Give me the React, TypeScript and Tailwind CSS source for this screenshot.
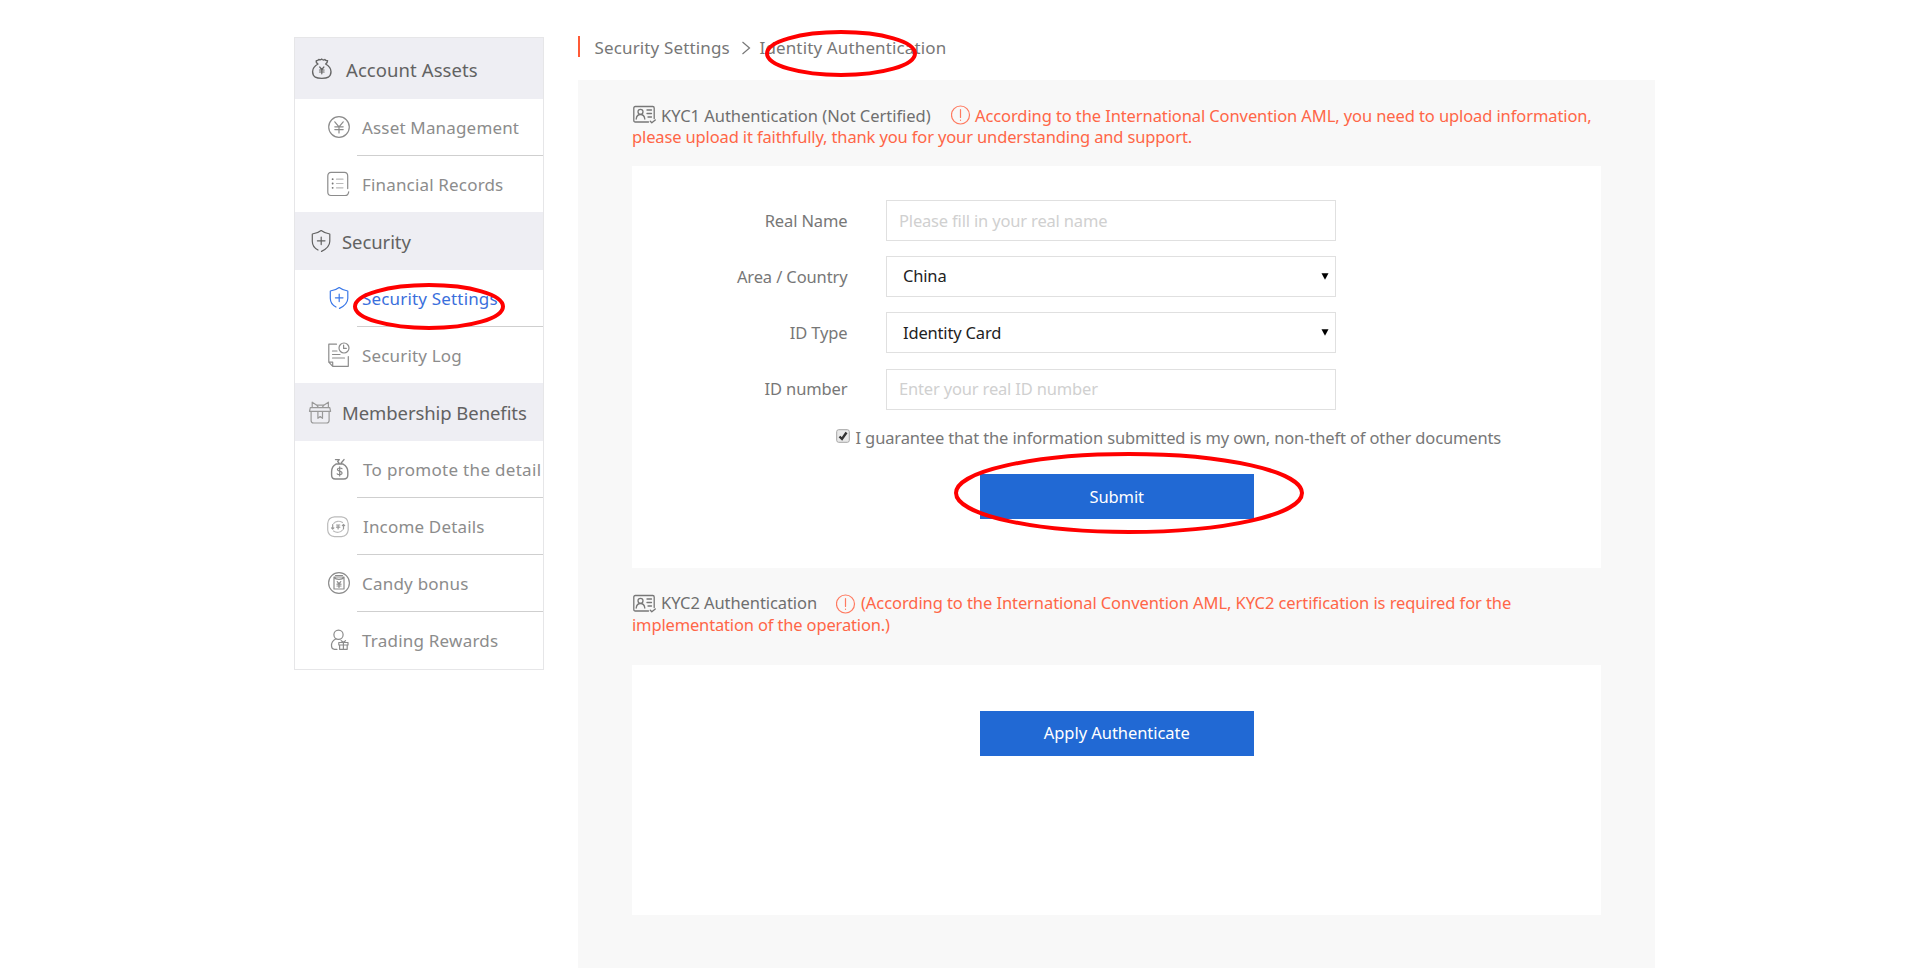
import type { ReactNode } from "react";

function Icon({ children, className = "" }: { children: ReactNode; className?: string }) {
  return (
    <svg
      viewBox="0 0 26 26"
      className={`h-[26px] w-[26px] shrink-0 ${className}`}
      fill="none"
      stroke="currentColor"
      strokeWidth="1.2"
      strokeLinecap="round"
      strokeLinejoin="round"
    >
      {children}
    </svg>
  );
}

const YenBag = () => (
  <Icon className="text-[#666]">
    <path
      strokeWidth="1.4"
      d="M10 8C8.500 7.200 8 6 8.300 4.600C9.300 4.800 10 4.400 10.800 3.500C11.800 4 12.800 4 13.800 3.100C14.600 4 15.600 4.200 16.800 3.500C17.400 4.400 18.400 4.800 19.600 4.600C19.600 6 19 7.200 17.600 8C20.900 9.800 23 12.500 23 15.800C23 18 22 20 20.300 21.200C18.800 22.200 16.500 22.400 13.800 22.400C11 22.400 8.800 22.200 7.300 21.200C5.600 20 4.600 18 4.600 15.800C4.600 12.500 6.700 9.800 10 8Z"
    />
    <path d="M11.700 11L13.800 13.500L15.900 11M11.500 14H16.100M11.500 16H16.100M13.800 13.500V17.800" />
  </Icon>
);
const YenCircle = () => (
  <Icon>
    <circle cx="13" cy="13" r="10.3" />
    <path d="M8.800 7.800L13 12.800L17.200 7.800M8.800 12.800H17.200M8.800 15.600H17.200M13 12.800V19" />
  </Icon>
);
const ListIcon = () => (
  <Icon>
    <path d="M21.700 17.600V5C21.700 2.900 20.600 1.400 18.500 1.400H5C3 1.400 1.800 2.900 1.800 5V21C1.800 23 3 24.500 5 24.500H19C21 24.500 22.300 23.400 22.700 20.800" />
    <path stroke="#777" strokeWidth="1.8" d="M6.600 8.200H6.700M6.600 12.500H6.700M6.600 16.800H6.700" />
    <path stroke="#bbb" d="M10.500 8.200H17M10.500 12.500H17M10.500 16.800H17" />
  </Icon>
);
const Shield = ({ className = "" }: { className?: string }) => (
  <Icon className={className}>
    <path d="M10 22C6 19.800 4.300 17 4.300 13.200V6C7.500 5.800 10.600 4.600 13.200 2.600C15.800 4.600 18.800 5.800 21.800 6V13.200C21.800 17.500 18.700 20.800 13.500 23.400" />
    <path d="M13.200 9V16.600M9.400 12.800H17" />
  </Icon>
);
const LogIcon = () => (
  <Icon>
    <path d="M10.500 2.200H2.800V20.200L6.700 24.300H22.300V14.500M2.800 20.200H6.700V24.300" />
    <path d="M6.500 9H11M6.500 12.500H14M6.500 16H18.500" />
    <circle cx="18" cy="6" r="5" />
    <path d="M17.600 3.200V6.400H20.300" />
  </Icon>
);
const Gift = () => (
  <Icon className="text-[#999]">
    <path d="M2.300 8.600H21.800L22.600 12.300H1.500L2.300 8.600ZM3.100 12.300V21.500C3.100 23.300 3.800 24 5.600 24H18.600C20.400 24 21.100 23.300 21.100 21.500V12.300M4.200 8.300V3.200L8.800 6.200L10.300 8.400M20.400 8.300V3.200L15.800 6.200L14.300 8.400M8.800 6.200H15.800M9.900 12.500V19.300L12.200 17.500L14.500 19.300V12.500" />
  </Icon>
);
const DollarBag = () => (
  <Icon className="text-[#888]">
    <path
      strokeWidth="1.400"
      d="M9.500 3.600H13.300L11.700 5.400L13.200 7.500M18 3.600L15.200 7M10 8H17M10 8.200C7 9.800 5.600 12.500 5.600 15.800V19C5.600 21.800 6.800 23 9.300 23H17.700C20.200 23 21.800 21.800 21.800 19V15.800C21.800 12.500 20 9.800 17 8.200"
    />
    <path d="M16 12.700C15.200 11.700 11.400 11.600 11.400 13.600C11.400 15.600 16.100 14.700 16.100 17C16.100 19 12.200 19 11.200 17.800M13.700 10.800V20" />
  </Icon>
);
const IncomeIcon = () => (
  <Icon className="text-[#bbb]">
    <path d="M8.500 3.900H15.500C19.500 4.200 21.800 6.700 22.200 10.500V17C21.800 20.800 19.500 23.300 15.500 23.700H8.500C4.500 23.300 2 20.800 1.700 17V10.500C2 6.700 4.500 4.200 8.500 3.900Z" />
    <path d="M16.500 9.500C13.500 7.500 9.500 8 7.700 10.500M7.500 18C10.500 20 14.500 19.700 16.500 17" />
    <path stroke="#999" d="M6.700 11.500V16M5.500 14.900L6.700 16L7.900 14.900M17.500 16V11.500M16.300 12.600L17.500 11.500L18.700 12.600M10.500 12H13.800M10.500 14.200H13.800M12.100 12V16" />
  </Icon>
);
const CandyIcon = () => (
  <Icon>
    <circle cx="13" cy="13" r="10.400" />
    <path d="M8 7H18V19H8ZM8 7.200C10 10.200 16 10.200 18 7.200M9.500 5.500H16.500M11.200 11.700L13 13.600L14.800 11.700M11 14.200H15M11 16H15M13 13.600V17.500" />
  </Icon>
);
const PersonGift = () => (
  <Icon>
    <circle cx="12.500" cy="7.700" r="4.600" />
    <path d="M10 11.800C6.800 13.500 5.300 16 5.500 19C5.700 21.500 6.500 22.300 8.500 22.300H11" />
    <path d="M12.800 15.500H22V18H12.800ZM13.600 18V22.300H21.200V18M17.400 15.500V22.300M17.400 15.200L15.200 13.700M17.400 15.200L19.500 13.700" />
  </Icon>
);

function Group({ icon, label, className = "h-[57px]", gap = "gap-2" }: { icon: ReactNode; label: string; className?: string; gap?: string }) {
  return (
    <div className={`flex items-center bg-[#eeeef3] pl-[13px] text-[18.5px] text-[#626262] ${className} ${gap}`}>
      {icon}
      <span className="pt-0.5 whitespace-nowrap">{label}</span>
    </div>
  );
}

function Item({ icon, label, active = false, last = false, className = "tracking-[0.170px]" }: { icon: ReactNode; label: string; active?: boolean; last?: boolean; className?: string }) {
  return (
    <div>
      <div className={`flex h-14 items-center gap-[10px] pl-[31px] text-[17px] ${active ? "text-[#3a6fdc]" : "text-[#8c8c8c]"}`}>
        {icon}
        <span className={`pt-0.5 whitespace-nowrap ${className}`}>{label}</span>
      </div>
      {!last && <div className="ml-[62px] h-px bg-[#cfcfcf]" />}
    </div>
  );
}

const IdCard = () => (
  <svg viewBox="0 0 24 20" className="h-5 w-6 shrink-0 text-[#777]" fill="none" stroke="currentColor" strokeWidth="1.300" strokeLinecap="round" strokeLinejoin="round">
    <path d="M16.500 17H3.300C2.300 17 1.800 16.500 1.800 15.500V3C1.800 2 2.300 1.500 3.300 1.500H20.700C21.700 1.500 22.200 2 22.200 3V13.500M18.300 16.200L19.800 17.800L23.300 15" />
    <circle cx="8.500" cy="6.800" r="2.500" />
    <path d="M4.200 14C4.500 11.500 6 9.500 8.500 9.500C11 9.500 12.500 11.500 12.800 14M15 5H19.500M15 8.500H19.500M16 12H19.500" />
  </svg>
);

const Alert = () => (
  <svg viewBox="0 0 20 20" className="h-5 w-5 shrink-0 text-[#ff7a60]" fill="none" stroke="currentColor" strokeWidth="1.200" strokeLinecap="round">
    <circle cx="9.500" cy="10" r="9" />
    <path d="M9.500 4.500V12.500M9.500 15V15.300" />
  </svg>
);

function Field({ label, children }: { label: string; children: ReactNode }) {
  return (
    <div className="flex h-[41px] items-center">
      <div className="w-[215.5px] pt-px text-right tracking-[-0.120px] text-[#777]">{label}</div>
      <div className="ml-[38.5px] flex h-full w-[450px] items-center border border-[#e0e0e0] bg-white tracking-[-0.170px]">{children}</div>
    </div>
  );
}

const Caret = () => (
  <svg viewBox="0 0 8 7" className="mr-[6.5px] ml-auto h-[7px] w-2 text-black">
    <path d="M0.500 0.200H7.500L4 6.800Z" fill="currentColor" />
  </svg>
);

function Ellipse({ className, w, h }: { className: string; w: number; h: number }) {
  return (
    <svg viewBox={`0 0 ${w} ${h}`} className={`pointer-events-none absolute ${className}`} fill="none" stroke="#ff0000" strokeWidth="4">
      <ellipse cx={w / 2} cy={h / 2} rx={w / 2 - 2} ry={h / 2 - 2} />
    </svg>
  );
}

export default function App() {
  return (
    <div className="flex h-[968px] items-start overflow-hidden bg-white pl-[294px] font-['Noto_Sans',sans-serif]">
      <aside className="relative mt-[37px] h-[633px] w-[250px] shrink-0 border border-[#e6e6e8] bg-white">
        <Group icon={<YenBag />} label="Account Assets" className="h-[61px] tracking-[0.080px]" gap="gap-3" />
        <Item icon={<YenCircle />} label="Asset Management" />
        <Item icon={<ListIcon />} label="Financial Records" last />
        <Group icon={<Shield />} label="Security" className="h-[58px] tracking-[-0.080px]" />
        <Item icon={<Shield className="text-[#3a78e8]" />} label="Security Settings" active />
        <Item icon={<LogIcon />} label="Security Log" last />
        <Group icon={<Gift />} label="Membership Benefits" className="h-[58px] tracking-[-0.080px]" />
        <Item icon={<DollarBag />} label="To promote the detail" className="pl-px tracking-[0.310px]" />
        <Item icon={<IncomeIcon />} label="Income Details" className="pl-px tracking-[0.170px]" />
        <Item icon={<CandyIcon />} label="Candy bonus" className="tracking-[0.220px]" />
        <Item icon={<PersonGift />} label="Trading Rewards" last className="tracking-[0.220px]" />
        <Ellipse w={152} h={47} className="top-[245px] left-[58px] h-[47px] w-[152px]" />
      </aside>

      <main className="ml-[34px] w-[1077px] shrink-0">
        <div className="relative flex h-20 pt-9">
          <div className="h-[21px] w-[2px] bg-[#ff5a36]" />
          <div className="ml-[14.5px] flex h-[23px] items-center text-[17px] tracking-[0.140px] whitespace-nowrap text-[#777]">
            <span className="w-[136px]">Security Settings</span>
            <svg viewBox="0 0 10 14" className="mx-[10px] h-[14px] w-[10px]" fill="none" stroke="currentColor" strokeWidth="1.200">
              <path d="M1.500 1L8.500 7L1.500 13" />
            </svg>
            <span className="-ml-px">Identity Authentication</span>
          </div>
          <Ellipse w={152} h={47} className="top-[30px] left-[187px] h-[47px] w-[152px]" />
        </div>

        <div className="h-[888px] bg-[#f8f8f8] px-[54px] pt-6 text-[16.5px]">
          <div className="h-[62px] whitespace-nowrap text-[#ff6647]">
            <div className="flex h-[22px] items-center">
              <IdCard />
              <span className="ml-[5px] w-[289.5px] pt-0.5 tracking-[-0.030px] text-[#6f6f6f]">KYC1 Authentication (Not Certified)</span>
              <Alert />
              <span className="ml-[4.5px] pt-0.5 tracking-[-0.100px]">According to the International Convention AML, you need to upload information,</span>
            </div>
            <div className="h-[22px] leading-[22px] tracking-[-0.135px]">please upload it faithfully, thank you for your understanding and support.</div>
          </div>

          <section className="h-[402px] bg-white pt-[34px]">
            <div className="flex flex-col gap-[15.2px]">
              <Field label="Real Name"><span className="pt-px pl-3 text-[#d0d0d0]">Please fill in your real name</span></Field>
              <Field label="Area / Country"><span className="pl-4 text-[#222]">China</span><Caret /></Field>
              <Field label="ID Type"><span className="pl-4 text-[#222]">Identity Card</span><Caret /></Field>
              <Field label="ID number"><span className="pl-3 text-[#d0d0d0]">Enter your real ID number</span></Field>
            </div>
            <div className="mt-[16.9px] flex h-6 items-center pl-[204px] whitespace-nowrap text-[#777]">
              <svg viewBox="0 0 14 14" className="mb-[5px] h-[14px] w-[14px] shrink-0">
                <rect x="0.700" y="0.700" width="12.600" height="12.600" rx="2" fill="#e9e9e9" stroke="#a5a5a5" />
                <path d="M3.500 7.500L6 10L10.500 3.500" fill="none" stroke="#333" strokeWidth="2.400" />
              </svg>
              <span className="ml-[5.5px] tracking-[-0.130px]">I guarantee that the information submitted is my own, non-theft of other documents</span>
            </div>
            <div className="relative mt-6 ml-[347.5px] flex h-[45px] w-[274.5px] items-center justify-center bg-[#2169d4] tracking-[-0.100px] text-white">
              Submit
              <Ellipse w={350} h={82} className="-top-[22px] -left-[25.5px] h-[82px] w-[350px]" />
            </div>
          </section>

          <div className="h-[97px] pt-[25px] whitespace-nowrap text-[#ff6647]">
            <div className="flex h-[21px] items-center">
              <IdCard />
              <span className="ml-[5px] w-[174.5px] tracking-[-0.080px] text-[#6f6f6f]">KYC2 Authentication</span>
              <Alert />
              <span className="ml-[5.5px] tracking-[-0.080px]">(According to the International Convention AML, KYC2 certification is required for the</span>
            </div>
            <div className="h-[22px] leading-[22px] tracking-[-0.150px]">implementation of the operation.)</div>
          </div>

          <section className="h-[250px] bg-white pt-[46px]">
            <div className="ml-[347.5px] flex h-[45px] w-[274.5px] items-center justify-center bg-[#2169d4] tracking-[-0.050px] text-white">
              Apply Authenticate
            </div>
          </section>
        </div>
      </main>
    </div>
  );
}
